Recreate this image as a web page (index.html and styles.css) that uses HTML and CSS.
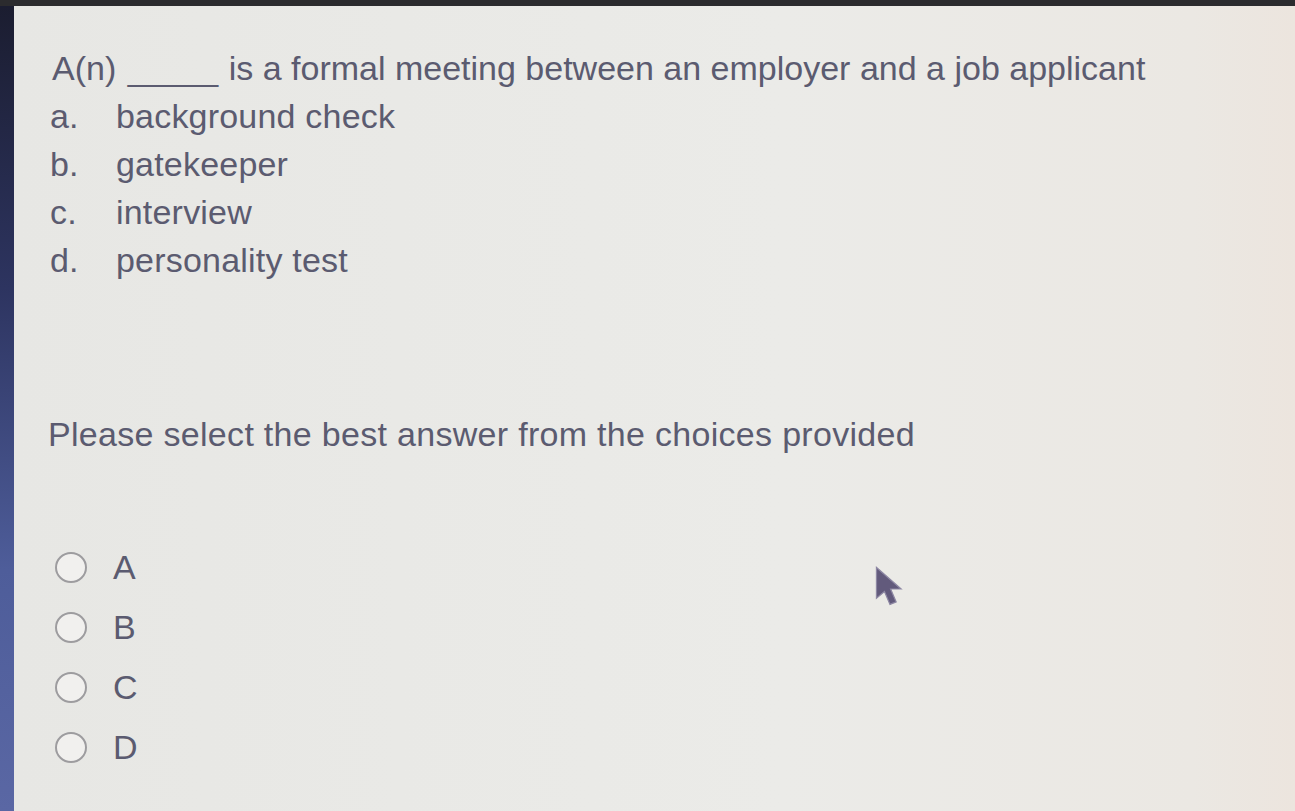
FILE: index.html
```html
<!DOCTYPE html>
<html>
<head>
<meta charset="utf-8">
<link rel="stylesheet" href="styles.css">
</head>
<body>
<div class="frame">
  <div class="side"></div>
  <div class="screen">
    <div class="question">A(n) <span class="blank">_____</span> is a formal meeting between an employer and a job applicant</div>
    <div class="choices">
      <div class="choice"><span class="letter">a.</span><span>background check</span></div>
      <div class="choice"><span class="letter">b.</span><span>gatekeeper</span></div>
      <div class="choice"><span class="letter">c.</span><span>interview</span></div>
      <div class="choice"><span class="letter">d.</span><span>personality test</span></div>
    </div>
    <div class="prompt">Please select the best answer from the choices provided</div>
    <div class="options">
      <label class="option"><span class="radio"></span><span>A</span></label>
      <label class="option"><span class="radio"></span><span>B</span></label>
      <label class="option"><span class="radio"></span><span>C</span></label>
      <label class="option"><span class="radio"></span><span>D</span></label>
    </div>
    <svg class="cursor" width="32" height="46" viewBox="0 0 26 37">
      <path d="M2 1 L2 26 L8.5 20.5 L13 31 L18 29 L13.5 18.5 L22 18.5 Z" fill="#625a7c" stroke="#8d87a3" stroke-width="1"/>
    </svg>
  </div>
</div>
</body>
</html>
```

FILE: styles.css
```css
html, body {
  margin: 0;
  padding: 0;
  height: 100%;
}

body {
  background: #e8e8e5;
  font-family: "Liberation Sans", Arial, sans-serif;
  color: #5b5b70;
  overflow: hidden;
}

.frame {
  display: flex;
  height: 811px;
  border-top: 6px solid #2b2b2e;
  box-sizing: border-box;
}

.side {
  width: 14px;
  flex: none;
  background: linear-gradient(180deg, #1b1d30 0%, #2d3460 35%, #4e5d9a 70%, #5a67a4 100%);
}

.screen {
  position: relative;
  flex: 1;
  padding: 38px 0 0 36px;
  background: linear-gradient(90deg, #e7e7e4 0%, #ebebe8 60%, #ebe8e3 92%, #ece5de 100%);
  font-size: 34px;
}

.question {
  line-height: 48px;
  padding-left: 2px;
  white-space: nowrap;
}

.blank {
  letter-spacing: -1px;
  margin-left: 2px;
  margin-right: 2px;
}

.choices {
  display: flex;
  flex-direction: column;
}

.choice {
  display: grid;
  grid-template-columns: 66px auto;
  line-height: 48px;
  letter-spacing: 0.2px;
}

.prompt {
  margin-top: 126px;
  line-height: 48px;
  margin-left: -2px;
  white-space: nowrap;
  letter-spacing: 0.3px;
}

.options {
  margin-top: 79px;
  display: flex;
  flex-direction: column;
}

.option {
  display: flex;
  align-items: center;
  height: 60px;
  padding-left: 5px;
  gap: 26px;
}

.radio {
  width: 28px;
  height: 27px;
  border: 2px solid #9d9c9f;
  border-radius: 50%;
  background: #f1f0ee;
  flex: none;
}

.cursor {
  position: absolute;
  left: 860px;
  top: 560px;
}
```
